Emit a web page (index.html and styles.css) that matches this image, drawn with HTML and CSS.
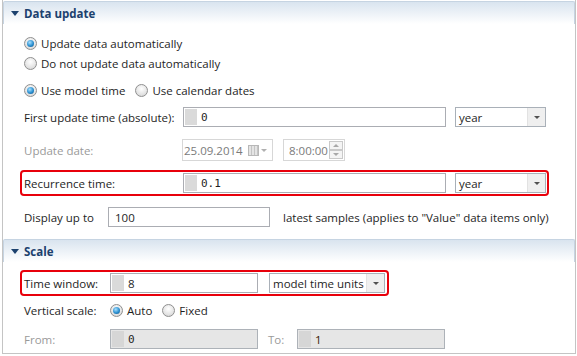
FILE: index.html
```html
<!DOCTYPE html>
<html lang="en">
<head>
  <meta charset="UTF-8" />
  <title>Chart properties</title>
  <link rel="stylesheet" href="styles.css">
</head>
<body>
  <div class="frame">

    <div class="section">
      <div class="section-head"><span class="twisty"></span>Data update</div>
      <div class="section-body">
        <div class="row radio-row r1">
          <span class="radio checked"></span><span class="opt">Update data automatically</span>
        </div>
        <div class="row radio-row">
          <span class="radio"></span><span class="opt">Do not update data automatically</span>
        </div>
        <div class="row radio-row r3">
          <span class="radio checked"></span><span class="opt">Use model time</span>
          <span class="radio second"></span><span class="opt">Use calendar dates</span>
        </div>

        <div class="row field-row r4">
          <span class="label wide">First update time (absolute):</span>
          <span class="textbox long"><span class="marker"></span><span class="code">0</span></span>
          <span class="combo unit"><span class="combo-text">year</span><span class="combo-btn"></span></span>
        </div>

        <div class="row field-row r5">
          <span class="label wide disabled">Update date:</span>
          <span class="datebox">25.09.2014<span class="cal-icon"></span><span class="tiny-arrow"></span></span>
          <span class="timebox">8:00:00<span class="spinner"><span class="spin up"></span><span class="spin down"></span></span></span>
        </div>

        <div class="row highlight r6">
          <span class="label wide">Recurrence time:</span>
          <span class="textbox long"><span class="marker"></span><span class="code">0.1</span></span>
          <span class="combo unit"><span class="combo-text">year</span><span class="combo-btn"></span></span>
        </div>

        <div class="row field-row r7">
          <span class="label short">Display up to</span>
          <span class="textbox samples"><span class="plain">100</span></span>
          <span class="note">latest samples (applies to "Value" data items only)</span>
        </div>
      </div>
    </div>

    <div class="section">
      <div class="section-head"><span class="twisty"></span>Scale</div>
      <div class="section-body">
        <div class="row highlight window r8">
          <span class="label mid">Time window:</span>
          <span class="textbox medium"><span class="marker"></span><span class="plain">8</span></span>
          <span class="combo units"><span class="combo-text">model time units</span><span class="combo-btn"></span></span>
        </div>
        <div class="row radio-row r9">
          <span class="label mid">Vertical scale:</span>
          <span class="radio checked"></span><span class="opt">Auto</span>
          <span class="radio third"></span><span class="opt">Fixed</span>
        </div>
        <div class="row field-row r10">
          <span class="label mid disabled">From:</span>
          <span class="textbox medium off"><span class="marker"></span><span class="code">0</span></span>
          <span class="label to disabled">To:</span>
          <span class="textbox medium off"><span class="marker"></span><span class="plain dark">1</span></span>
        </div>
      </div>
    </div>

  </div>
</body>
</html>
```

FILE: styles.css
```css
html, body {
  margin: 0;
  background: #ffffff;
}

body {
  font-family: 'Open Sans', 'Noto Sans', sans-serif;
  font-size: 11.5px;
  color: #1e1e1e;
}

.frame {
  width: 572px;
  height: 353px;
  margin-left: 2px;
  border: 1px solid #c4c4c4;
  border-top: none;
  overflow: hidden;
}

.section-head {
  height: 22px;
  margin-top: 1px;
  display: flex;
  align-items: center;
  border: 1px solid #c6d4e2;
  border-bottom: none;
  border-radius: 2px 2px 0 0;
  background: linear-gradient(#d9e4ef, #ffffff);
  color: #1c416e;
  font-weight: bold;
  font-size: 11.5px;
}

.twisty {
  width: 0;
  height: 0;
  margin: 1px 5px 0 7px;
  border-left: 4px solid transparent;
  border-right: 4px solid transparent;
  border-top: 5px solid #1c416e;
}

.section-body {
  padding-left: 14px;
}

.row {
  display: flex;
  align-items: center;
}

.radio-row { height: 20px; }
.field-row { height: 20px; }

.r1 { margin-top: 9px; }
.r3 { margin-top: 7px; }
.r4 { margin-top: 7px; }
.r5 { margin-top: 12px; height: 22px; }
.r6 { margin-top: 9px; }
.r7 { margin-top: 11px; margin-bottom: 12px; }
.r8 { margin-top: 8px; }
.r9 { margin-top: 4px; }
.r10 { margin-top: 9px; }

.radio-row .radio { margin-left: 7px; }

.radio {
  box-sizing: border-box;
  width: 13px;
  height: 13px;
  border-radius: 50%;
  border: 1px solid #8f8f8f;
  background: radial-gradient(circle at 50% 35%, #ffffff, #e4e4e4 60%, #cfcfcf);
  display: flex;
  align-items: center;
  justify-content: center;
  flex: none;
}

.radio.checked::after {
  content: "";
  width: 7px;
  height: 7px;
  border-radius: 50%;
  background: radial-gradient(circle at 40% 35%, #a8e0ff, #2a8fd0 55%, #0d4b7c);
}

.radio-row .radio.second { margin-left: 10px; }
.r9 .radio { margin-left: 0; }
.r9 .radio.third { margin-left: 10px; }

.opt {
  margin-left: 4px;
}

.label {
  flex: none;
  padding-left: 7px;
  box-sizing: border-box;
}

.label.wide { width: 166px; }
.label.short { width: 91px; }
.label.mid { width: 93px; }
.label.to { width: 39px; padding-left: 10px; }

.disabled { color: #9a9a9a; }

.textbox {
  box-sizing: border-box;
  height: 20px;
  border: 1px solid #abadb3;
  background: #ffffff;
  display: flex;
  align-items: center;
  flex: none;
}

.textbox.long { width: 263px; }
.textbox.medium { width: 148px; }
.textbox.samples { width: 162px; }
.textbox.off { background: #e6e6e6; border-color: #adb2b8; }

.marker {
  width: 12px;
  height: 16px;
  margin-left: 1px;
  background: #dadada;
}

.off .marker { background: #d6d6d6; }

.code {
  margin-left: 4px;
  font-family: 'DejaVu Sans Mono', 'Liberation Mono', monospace;
  font-size: 11px;
}

.plain {
  margin-left: 4px;
}

.plain.dark { color: #3a1a00; }

.textbox.samples .plain { margin-left: 6px; }

.combo {
  box-sizing: border-box;
  height: 20px;
  border: 1px solid #a9b0b8;
  background: #ffffff;
  display: flex;
  align-items: stretch;
  flex: none;
}

.combo.unit { width: 91px; margin-left: 9px; }
.combo.units { width: 116px; margin-left: 11px; }

.combo-text {
  flex: 1;
  padding-left: 3px;
  display: flex;
  align-items: center;
}

.combo-btn {
  width: 17px;
  background: #efefef;
  border-left: 1px solid #e2e2e2;
  display: flex;
  align-items: center;
  justify-content: center;
}

.combo-btn::after {
  content: "";
  border-left: 3px solid transparent;
  border-right: 3px solid transparent;
  border-top: 3px solid #505050;
}

.highlight {
  box-sizing: border-box;
  width: 529px;
  height: 26px;
  margin-left: 3px;
  padding: 0 1px 0 0;
  border: 2px solid #e8000b;
  border-radius: 4px;
}

.highlight .label.wide { width: 161px; padding-left: 2px; }

.highlight.window { width: 369px; padding-right: 2px; }
.highlight.window .label.mid { width: 88px; padding-left: 2px; }

.datebox, .timebox {
  box-sizing: border-box;
  height: 22px;
  border: 1px solid #d7d7d7;
  color: #7a7a7a;
  display: flex;
  align-items: center;
  flex: none;
}

.datebox { width: 91px; margin-left: -1px; padding-left: 1px; }
.timebox { width: 62px; margin-left: 10px; padding-left: 5px; }

.cal-icon {
  width: 9px;
  height: 9px;
  margin-left: 5px;
  border: 1px solid #b8b8b8;
  background:
    repeating-linear-gradient(90deg, #e4e4e4 0 2px, #c4c4c4 2px 3px),
    #e4e4e4;
}

.tiny-arrow {
  margin-left: 2px;
  border-left: 3px solid transparent;
  border-right: 3px solid transparent;
  border-top: 3px solid #b0b0b0;
}

.spinner {
  margin-left: 1px;
  width: 14px;
  height: 18px;
  display: flex;
  flex-direction: column;
}

.spin {
  flex: 1;
  border: 1px solid #c9c9c9;
  background: #f4f4f4;
  display: flex;
  align-items: center;
  justify-content: center;
}

.spin.up::after {
  content: "";
  border-left: 3px solid transparent;
  border-right: 3px solid transparent;
  border-bottom: 3px solid #a8a8a8;
}

.spin.down::after {
  content: "";
  border-left: 3px solid transparent;
  border-right: 3px solid transparent;
  border-top: 3px solid #a8a8a8;
}

.note {
  margin-left: 13px;
  white-space: nowrap;
}
```
